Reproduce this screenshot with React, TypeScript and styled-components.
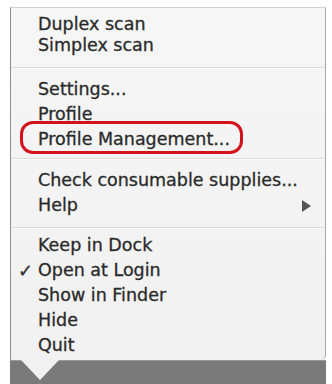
import React from "react";
import styled, { createGlobalStyle } from "styled-components";

const Global = createGlobalStyle`
  html, body { margin: 0; padding: 0; background: #ffffff; }
  body { width: 332px; height: 384px; overflow: hidden; font-family: "DejaVu Sans", "Liberation Sans", sans-serif; }
`;

const Page = styled.div`
  display: flex;
  flex-direction: column;
  padding: 7px 6px 0 10px;
  height: 384px;
  box-sizing: border-box;
`;

const Menu = styled.div`
  position: relative;
  width: 316px;
  box-sizing: border-box;
  background: linear-gradient(to bottom, #f6f6f6, #f1f1f1);
  border-top: 1px solid #d2d2d2;
  border-left: 1px solid #8c8c8c;
  border-right: 1px solid #a9a9a9;
  border-bottom-right-radius: 5px;
  padding: 6px 0 2px 0;
  display: flex;
  flex-direction: column;
  z-index: 1;
`;

const Pointer = styled.div`
  position: absolute;
  left: 10px;
  top: 100%;
  width: 0;
  height: 0;
  border-left: 19px solid transparent;
  border-right: 19px solid transparent;
  border-top: 20px solid #f1f1f1;
`;

const Group = styled.div`
  display: flex;
  flex-direction: column;
`;

const Row = styled.div<{ $h: number }>`
  position: relative;
  height: ${(p) => p.$h}px;
  line-height: ${(p) => p.$h}px;
  padding-left: 27px;
  padding-right: 14px;
  font-size: 17.5px;
  color: #2a2a2a;
  -webkit-text-stroke: 0.3px #2a2a2a;
  display: flex;
  align-items: center;
  white-space: nowrap;
`;

const Label = styled.span`
  flex: 1;
`;

const Check = styled.span`
  position: absolute;
  left: 7px;
  top: 0;
  font-size: 18px;
  font-weight: bold;
  color: #333;
`;

const SubArrow = styled.span`
  width: 0;
  height: 0;
  border-top: 6px solid transparent;
  border-bottom: 6px solid transparent;
  border-left: 9px solid #555;
`;

const Separator = styled.div<{ $above: number; $below: number }>`
  height: 1px;
  background: #dadada;
  box-shadow: 0 1px 0 #fbfbfb;
  margin: ${(p) => p.$above}px 0 ${(p) => p.$below}px 0;
`;

const Highlight = styled.div`
  position: absolute;
  left: 9px;
  top: -6px;
  width: 223px;
  height: 33px;
  box-sizing: border-box;
  border: 3.5px solid #d3121c;
  border-radius: 13px;
  pointer-events: none;
`;

const Dock = styled.div`
  width: 316px;
  height: 24px;
  background: #7a7a7a;
  border-top: 1px solid #9a9a9a;
  box-sizing: border-box;
`;

export default function App() {
  return (
    <>
      <Global />
      <Page>
        <Menu>
          <Group>
            <Row $h={21}><Label>Duplex scan</Label></Row>
            <Row $h={21}><Label>Simplex scan</Label></Row>
          </Group>
          <Separator $above={11} $below={9} />
          <Group>
            <Row $h={25}><Label>Settings...</Label></Row>
            <Row $h={25}><Label>Profile</Label></Row>
            <Row $h={25}>
              <Label>Profile Management...</Label>
              <Highlight />
            </Row>
          </Group>
          <Separator $above={6} $below={9} />
          <Group>
            <Row $h={25}><Label>Check consumable supplies...</Label></Row>
            <Row $h={25}><Label>Help</Label><SubArrow /></Row>
          </Group>
          <Separator $above={9} $below={5} />
          <Group>
            <Row $h={25}><Label>Keep in Dock</Label></Row>
            <Row $h={25}><Check>✓</Check><Label>Open at Login</Label></Row>
            <Row $h={25}><Label>Show in Finder</Label></Row>
            <Row $h={25}><Label>Hide</Label></Row>
            <Row $h={25}><Label>Quit</Label></Row>
          </Group>
          <Pointer />
        </Menu>
        <Dock />
      </Page>
    </>
  );
}
